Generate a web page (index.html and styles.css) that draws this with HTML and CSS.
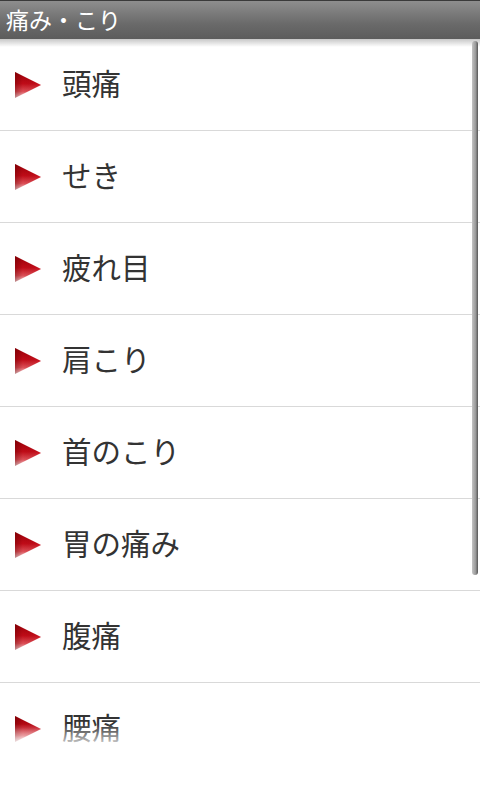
FILE: index.html
```html
<!DOCTYPE html>
<html lang="ja">
<head>
<meta charset="utf-8">
<link rel="stylesheet" href="styles.css">
</head>
<body>
<div class="screen">
  <header class="titlebar">痛み・こり</header>
  <div class="list">
    <ul class="items">
      <li class="item"><svg class="arrow" viewBox="0 0 26 26"><use href="#tri"/></svg><span class="label">頭痛</span></li>
      <li class="item"><svg class="arrow" viewBox="0 0 26 26"><use href="#tri"/></svg><span class="label">せき</span></li>
      <li class="item"><svg class="arrow" viewBox="0 0 26 26"><use href="#tri"/></svg><span class="label">疲れ目</span></li>
      <li class="item"><svg class="arrow" viewBox="0 0 26 26"><use href="#tri"/></svg><span class="label">肩こり</span></li>
      <li class="item"><svg class="arrow" viewBox="0 0 26 26"><use href="#tri"/></svg><span class="label">首のこり</span></li>
      <li class="item"><svg class="arrow" viewBox="0 0 26 26"><use href="#tri"/></svg><span class="label">胃の痛み</span></li>
      <li class="item"><svg class="arrow" viewBox="0 0 26 26"><use href="#tri"/></svg><span class="label">腹痛</span></li>
      <li class="item"><svg class="arrow" viewBox="0 0 26 26"><use href="#tri"/></svg><span class="label">腰痛</span></li>
    </ul>
    <div class="shadow"></div>
    <div class="scrollbar"></div>
    <div class="fade"></div>
  </div>
</div>
<svg width="0" height="0" class="defs">
  <defs>
    <linearGradient id="gv" x1="0" y1="0" x2="0" y2="1">
      <stop offset="0" stop-color="#9a0008"/>
      <stop offset="0.45" stop-color="#c00c18"/>
      <stop offset="0.75" stop-color="#dc5058"/>
      <stop offset="1" stop-color="#f8dcde"/>
    </linearGradient>
    <linearGradient id="gh" x1="0" y1="0" x2="1" y2="0">
      <stop offset="0" stop-color="#500000" stop-opacity="0.35"/>
      <stop offset="0.3" stop-color="#500000" stop-opacity="0"/>
      <stop offset="1" stop-color="#ff3040" stop-opacity="0.15"/>
    </linearGradient>
    <g id="tri">
      <polygon points="0,0 26,13 0,26" fill="url(#gv)"/>
      <polygon points="0,0 26,13 0,26" fill="url(#gh)"/>
    </g>
  </defs>
</svg>
</body>
</html>
```

FILE: styles.css
```css
html, body {
  margin: 0;
  padding: 0;
  background: #ffffff;
}
.defs {
  position: absolute;
  width: 0;
  height: 0;
}
.screen {
  width: 480px;
  height: 800px;
  overflow: hidden;
  display: flex;
  flex-direction: column;
  font-family: "Noto Sans CJK JP", "Noto Sans", sans-serif;
}
.titlebar {
  height: 38px;
  border-top: 1px solid #3a3a3a;
  background: linear-gradient(#8e8e8e, #6a6a6a 60%, #5c5c5c);
  color: #ffffff;
  font-size: 23px;
  line-height: 37px;
  padding-left: 6px;
  flex: none;
}
.list {
  position: relative;
  flex: 1;
  overflow: hidden;
}
.items {
  list-style: none;
  margin: 0;
  padding: 0;
}
.item {
  height: 91px;
  border-bottom: 1px solid #d9d9d9;
  display: flex;
  align-items: center;
  padding-left: 15px;
}
.arrow {
  width: 26px;
  height: 26px;
  flex: none;
}
.label {
  margin-left: 21px;
  font-size: 29.5px;
  color: #333333;
  line-height: 1;
  margin-top: -4px;
}
.shadow {
  position: absolute;
  top: 0;
  left: 0;
  right: 0;
  height: 8px;
  background: linear-gradient(rgba(0,0,0,0.22), rgba(0,0,0,0));
}
.scrollbar {
  position: absolute;
  top: 2px;
  right: 2px;
  width: 6px;
  height: 534px;
  border-radius: 3px;
  background: linear-gradient(90deg, #c4c4c4, #9a9a9a 60%, #555555);
}
.fade {
  position: absolute;
  left: 0;
  right: 0;
  bottom: 0;
  height: 95px;
  background: linear-gradient(rgba(255,255,255,0) 20%, #ffffff 48%);
}
```
